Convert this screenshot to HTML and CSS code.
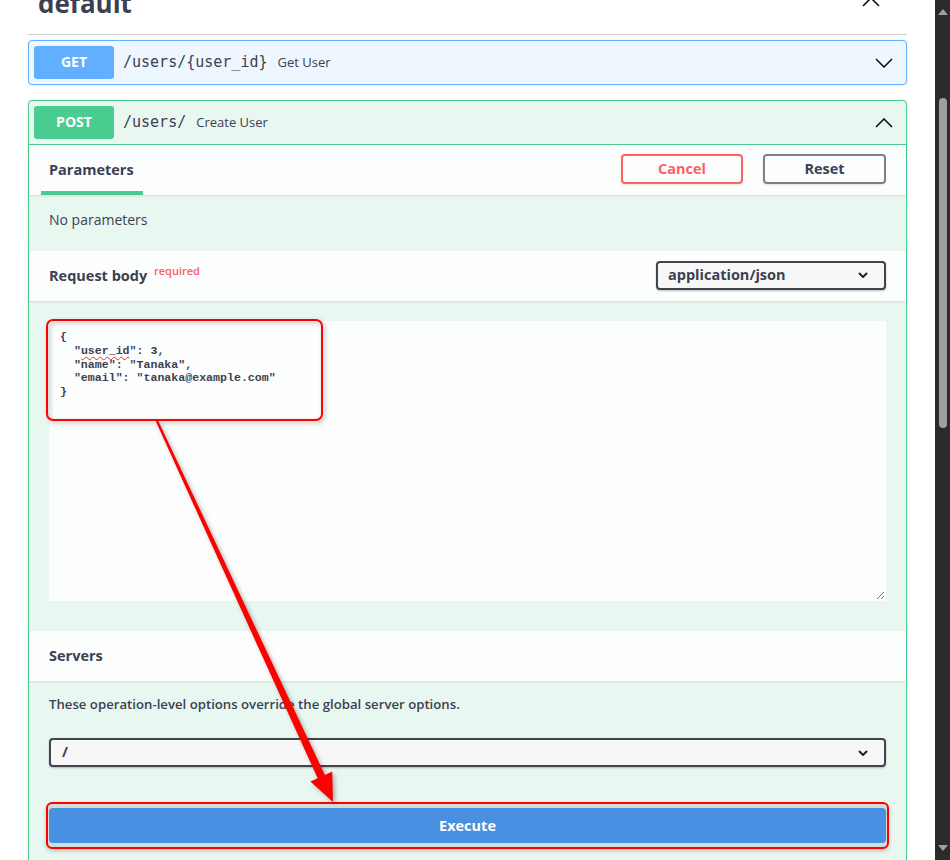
FILE: index.html
```html
<!DOCTYPE html>
<html lang="en">
  <head>
    <meta charset="UTF-8" />
    <meta name="viewport" content="width=device-width, initial-scale=1.0" />
    <title>Swagger UI</title>
    <link rel="stylesheet" href="styles.css">
  </head>
  <body>
    <div class="page">
      <main class="content">
        <div class="tag">
          <h2>default</h2>
          <svg class="chev tag-chev" width="18" height="10" viewBox="0 0 18 10"><polyline points="1,9 9,1 17,9" /></svg>
        </div>

        <div class="opblock get">
          <div class="summary">
            <span class="method">GET</span>
            <span class="path">/users/{user_id}</span>
            <span class="desc">Get User</span>
            <svg class="chev" width="18" height="10" viewBox="0 0 18 10"><polyline points="1,1 9,9 17,1" /></svg>
          </div>
        </div>

        <div class="opblock post">
          <div class="summary">
            <span class="method">POST</span>
            <span class="path">/users/</span>
            <span class="desc">Create User</span>
            <svg class="chev" width="18" height="10" viewBox="0 0 18 10"><polyline points="1,9 9,1 17,9" /></svg>
          </div>

          <div class="section-header params-header">
            <div class="tab"><h4>Parameters</h4></div>
            <div class="actions">
              <button class="btn cancel">Cancel</button>
              <button class="btn reset">Reset</button>
            </div>
          </div>
          <div class="section-body no-params">
            <p>No parameters</p>
          </div>

          <div class="section-header">
            <h4>Request body <span class="required">required</span></h4>
            <div class="select content-type">
              <span>application/json</span>
              <svg class="sel-chev" width="10" height="6" viewBox="0 0 10 6"><polyline points="1,1 5,5 9,1" /></svg>
            </div>
          </div>
          <div class="section-body body-param">
            <div class="code">{
  "<span class="typo">user_id</span>": 3,
  "name": "Tanaka",
  "email": "tanaka@example.com"
}<svg class="resize" width="9" height="9" viewBox="0 0 9 9"><line x1="1" y1="8" x2="8" y2="1" /><line x1="5" y1="8" x2="8" y2="5" /></svg></div>
          </div>

          <div class="section-header">
            <h4>Servers</h4>
          </div>
          <div class="section-body servers">
            <p>These operation-level options override the global server options.</p>
            <div class="select server">
              <span>/</span>
              <svg class="sel-chev" width="10" height="6" viewBox="0 0 10 6"><polyline points="1,1 5,5 9,1" /></svg>
            </div>
            <div class="highlight">
              <button class="execute">Execute</button>
            </div>
          </div>
        </div>

        <!-- annotation drawn over the screenshot -->
        <svg class="annotation" width="935" height="860" viewBox="0 0 935 860">
          <rect x="47" y="320" width="275" height="100" rx="6" />
          <polygon points="155.9,421.5 317.7,778.3 310.4,781.6 333,802 332.2,771.6 324.9,774.9 158.1,420.5" />
        </svg>
      </main>

      <div class="scrollbar">
        <div class="arrow up"></div>
        <div class="thumb"></div>
        <div class="track"></div>
        <div class="arrow down"></div>
      </div>
    </div>
  </body>
</html>
```

FILE: styles.css
```css
body {
  margin: 0;
  padding: 0;
  background: #fff;
  font-family: "Open Sans", "Noto Sans", sans-serif;
  color: #3b4151;
}
.page {
  display: flex;
  width: 950px;
  height: 860px;
  overflow: hidden;
}
.content {
  position: relative;
  width: 935px;
  height: 860px;
  padding: 0 28px;
  box-sizing: border-box;
  overflow: hidden;
}

/* tag header */
.tag {
  display: flex;
  justify-content: space-between;
  height: 35px;
  box-sizing: border-box;
  border-bottom: 1px solid #cccccc;
}
.tag h2 {
  margin: -10px 0 0 10px;
  font-size: 26px;
  line-height: 26px;
  font-weight: 700;
}
.chev polyline {
  fill: none;
  stroke: #111;
  stroke-width: 1.6;
}
.tag-chev {
  margin: -3px 27px 0 0;
}

/* operation blocks */
.opblock {
  border: 1px solid;
  border-radius: 4px;
  margin-top: 5px;
  box-shadow: 0 0 3px rgba(0, 0, 0, 0.1);
}
.opblock.get {
  border-color: #61affe;
  background: #eef6fe;
}
.opblock.post {
  margin-top: 15px;
  border-color: #49cc90;
  background: #e9f7f1;
}
.summary {
  display: flex;
  align-items: center;
  padding: 5px;
}
.summary > span:not(.method) {
  padding-bottom: 2px;
}
.post .summary {
  border-bottom: 1px solid #49cc90;
}
.method {
  display: flex;
  align-items: center;
  justify-content: center;
  width: 80px;
  height: 33px;
  padding-bottom: 2px;
  box-sizing: border-box;
  border-radius: 3px;
  color: #fff;
  font-size: 14px;
  font-weight: 700;
}
.get .method {
  background: #61affe;
}
.post .method {
  background: #49cc90;
}
.path {
  margin-left: 9px;
  font-family: "DejaVu Sans Mono", monospace;
  font-size: 15px;
}
.desc {
  margin-left: 10px;
  font-size: 13px;
}
.summary .chev {
  margin-left: auto;
  margin-right: 8px;
}

/* sections */
.section-header {
  position: relative;
  display: flex;
  align-items: center;
  justify-content: space-between;
  height: 50px;
  padding: 0 20px 2px;
  box-sizing: border-box;
  background: #fbfefd;
  box-shadow: 0 1px 2px rgba(0, 0, 0, 0.1);
}
.section-header h4 {
  margin: 0;
  font-size: 14.5px;
  font-weight: 700;
}
.params-header {
  align-items: stretch;
  padding-left: 12px;
  padding-bottom: 0;
}
.tab {
  display: flex;
  align-items: center;
  padding: 2px 9px 0 8px;
  border-bottom: 4px solid #49cc90;
}
.actions {
  display: flex;
  align-items: center;
  gap: 20px;
  padding-bottom: 2px;
}
.btn {
  height: 30px;
  padding-bottom: 2px;
  border: 2px solid #808080;
  border-radius: 4px;
  background: transparent;
  font-family: inherit;
  font-size: 14.5px;
  font-weight: 700;
  color: #3b4151;
  box-shadow: 0 1px 2px rgba(0, 0, 0, 0.1);
}
.btn.cancel {
  width: 122px;
  border-color: #ff6060;
  color: #ff6060;
}
.btn.reset {
  width: 123px;
}
.required {
  position: relative;
  top: -6px;
  margin-left: 3px;
  font-size: 11px;
  font-weight: 600;
  color: #ff6060;
}

.section-body p {
  margin: 0;
}
.no-params {
  padding: 15px 20px 21px;
  font-size: 14px;
  line-height: 20px;
}

/* selects */
.select {
  display: flex;
  align-items: center;
  justify-content: space-between;
  box-sizing: border-box;
  height: 29px;
  padding: 0 16px 2px 10px;
  border: 2px solid #41444e;
  border-radius: 4px;
  background: #f7f7f7;
  box-shadow: 0 1px 2px rgba(0, 0, 0, 0.25);
  font-size: 14.5px;
  font-weight: 700;
}
.select.content-type {
  width: 230px;
}
.select.server {
  margin-top: 25px;
  padding-left: 11px;
}
.sel-chev {
  margin-top: 2px;
}
.sel-chev polyline {
  fill: none;
  stroke: #222;
  stroke-width: 2;
}

/* request body */
.body-param {
  padding: 20px 20px 30px;
}
.code {
  position: relative;
  height: 280px;
  box-sizing: border-box;
  padding: 9px 11px;
  background: #fbfefd;
  white-space: pre;
  font-family: "Liberation Mono", monospace;
  font-size: 11.6px;
  font-weight: 700;
  line-height: 13.75px;
}
.typo {
  text-decoration: underline wavy #ff2020;
  text-decoration-thickness: 1px;
  text-underline-offset: 2px;
}
.resize {
  position: absolute;
  right: 1px;
  bottom: 1px;
}
.resize line {
  stroke: #777;
  stroke-width: 1;
}

/* servers */
.servers {
  padding: 14px 20px 20px;
}
.servers p {
  font-size: 13.2px;
  font-weight: 600;
  line-height: 18px;
}
.highlight {
  margin: 35px -3px 0;
  padding: 4px 1px;
  border: 2px solid #ff0000;
  border-radius: 6px;
  background: #d3ddd8;
  box-shadow: 0 2px 4px rgba(0, 0, 0, 0.2);
}
.execute {
  display: block;
  width: 100%;
  height: 35px;
  padding-bottom: 2px;
  border: none;
  border-radius: 4px;
  background: #4990e2;
  color: #fff;
  font-family: inherit;
  font-size: 14.5px;
  font-weight: 700;
}

/* red arrow annotation */
.annotation {
  position: absolute;
  top: 0;
  left: 0;
  pointer-events: none;
  filter: drop-shadow(2px 2px 2px rgba(0, 0, 0, 0.3));
}
.annotation rect {
  fill: none;
  stroke: #ff0000;
  stroke-width: 2;
}
.annotation polygon {
  fill: #ff0000;
}

/* fake window scrollbar */
.scrollbar {
  display: flex;
  flex-direction: column;
  align-items: center;
  width: 15px;
  background: #2b2b2b;
  padding: 9px 0 9px;
  box-sizing: border-box;
}
.arrow {
  width: 0;
  height: 0;
  border-left: 5px solid transparent;
  border-right: 5px solid transparent;
}
.arrow.up {
  border-bottom: 6px solid #a0a0a0;
}
.arrow.down {
  border-top: 6px solid #a0a0a0;
}
.thumb {
  width: 8px;
  height: 330px;
  margin-top: 83px;
  border-radius: 4px;
  background: #9f9f9f;
}
.track {
  flex: 1;
}
```
